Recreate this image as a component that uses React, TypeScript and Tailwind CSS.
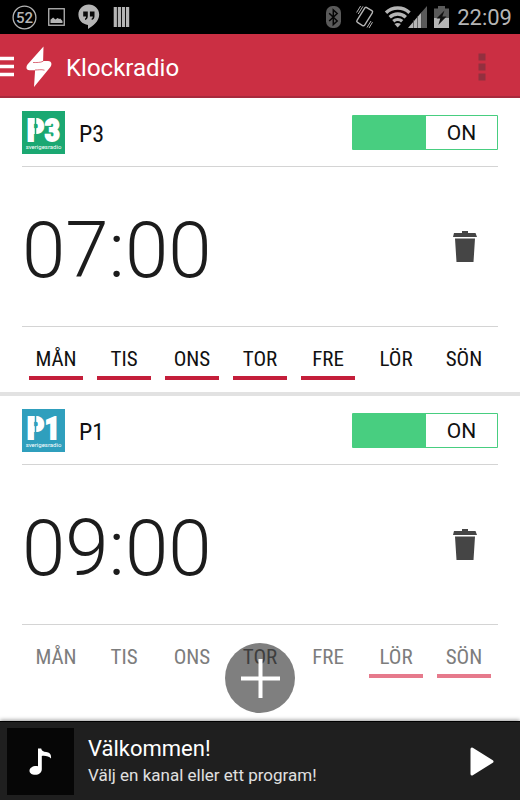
import { useState } from "react"

type Alarm = {
  channel: "P3" | "P1"
  time: string
  days: string[]
  muted?: boolean
}

const DAYS = ["MÅN", "TIS", "ONS", "TOR", "FRE", "LÖR", "SÖN"]

const ALARMS: Alarm[] = [
  {
    channel: "P3",
    time: "07:00",
    days: ["MÅN", "TIS", "ONS", "TOR", "FRE"],
  },
  {
    channel: "P1",
    time: "09:00",
    days: ["LÖR", "SÖN"],
    muted: true,
  },
]

function StatusBar() {
  return (
    <div className="flex h-[34px] items-center justify-between bg-black pr-2 pl-3 text-[#b5b5b5]">
      <div className="flex items-center gap-[11px]">
        <svg width="25" height="25" viewBox="0 0 25 25">
          <circle cx="12.5" cy="12.5" r="11.4" fill="none" stroke="currentColor" strokeWidth="1.3" />
          <text
            x="12.5"
            y="18"
            textAnchor="middle"
            fill="currentColor"
            className="text-[15px] font-medium"
          >
            52
          </text>
        </svg>
        <svg width="17" height="18" viewBox="0 0 17 18">
          <rect x=".75" y=".75" width="15.5" height="16.5" fill="none" stroke="currentColor" strokeWidth="1.3" />
          <path d="M2.5 15v-3.2l2.6-2.3 2.3 2 2.2-1.5 1.6 1.1 1-.5 2.3 2.4v2Z" fill="currentColor" />
        </svg>
        <svg width="26" height="26" viewBox="0 0 26 26">
          <path d="M12.8.6C7 .6 2.4 5 2.4 10.6s4.3 10 9.6 10.3v4c4.700-2.300 11.200-7.500 11.200-14.300C23.200 5 18.600.6 12.800.6Z" fill="currentColor" />
          <path d="M7.200 7.500h4.600v4.700c0 2-1 3.300-2.800 3.800v-1.600c.8-.4 1.100-1.100 1.100-2H7.200Zm6.700 0h4.600v4.700c0 2-1 3.300-2.800 3.800v-1.600c.8-.4 1.100-1.100 1.100-2h-2.900Z" fill="#0a0a0a" />
        </svg>
        <svg width="17" height="20" viewBox="0 0 17 20">
          <path d="M2.300 0V20M6.400 0V20M10.500 0V20M14.600 0V20" stroke="currentColor" strokeWidth="3.200" />
        </svg>
      </div>

      <div className="flex items-center">
        <svg width="15" height="23" viewBox="0 0 15 23">
          <rect width="15" height="22" rx="6.500" fill="#5a5a5a" />
          <path d="m3.200 7.200 8 7.800-3.900 3.500V4l3.900 3.500-8 7.500" fill="none" stroke="#050505" strokeWidth="1.500" />
        </svg>
        <svg width="20" height="24" viewBox="0 0 20 24" className="ml-[14px]">
          <g fill="none" stroke="currentColor">
            <rect x="5.200" y="2.800" width="9" height="17.500" rx="1.500" transform="rotate(32 9.700 11.500)" strokeWidth="1.400" />
            <path d="m1.600 7.500 4-6.500M3.200 9 8 1.300M12 22.500l4-6.500M14 23l3.500-5.800" strokeWidth="1" />
          </g>
        </svg>
        <svg width="28" height="22" viewBox="0 0 28 22" className="ml-[9px]">
          <g fill="none" stroke="currentColor" strokeWidth="3.400">
            <path d="M2 6.700C8.500.5 19 .5 25.500 6.700" />
            <path d="M5.700 11.200c4.600-4.300 11.500-4.300 16.100 0" />
            <path d="M9.300 15.300c2.600-2.300 6.300-2.300 8.900 0" />
          </g>
          <path d="M13.700 21.500 10.500 18c1.900-1.500 4.500-1.500 6.400 0Z" fill="currentColor" />
        </svg>
        <svg width="19" height="22" viewBox="0 0 19 22" className="-ml-1">
          <path d="M13.500 6.300 19 0v22h-5.500Z" fill="#5a5a5a" />
          <path d="M0 22 13.500 6.300V22Z" fill="currentColor" />
          <path d="M5.500 14v8M9.500 10v12M13.500 6v16" stroke="#444" strokeWidth=".7" />
        </svg>
        <svg width="15" height="22" viewBox="0 0 15 22" className="ml-[7px]">
          <path d="M0 2.500h4V0h7v2.500h4V22H0Z" fill="#5a5a5a" />
          <path d="M0 12h15v10H0Z" fill="currentColor" />
          <path d="m10.500 4.500-8 8h3.800l-2 6.500 8.200-8.500H8.300Z" fill="#111" />
        </svg>
        <span className="ml-2 pt-0.5 text-[22px] leading-none">22:09</span>
      </div>
    </div>
  )
}

function AppBar() {
  return (
    <header className="flex h-16 items-center border-b-2 border-[#a82a3d] bg-[#cb2f43] pt-1 text-white">
      <button aria-label="Meny" className="flex items-center">
        <svg width="14" height="22" viewBox="0 0 14 22">
          <path d="M0 2.500h14M0 10.500h14M0 18.500h14" stroke="currentColor" strokeWidth="3.400" />
        </svg>
        <svg width="26" height="42" viewBox="0 0 26 42" className="ml-3">
          <path
            d="M17.500.5 1.500 18.500C-.5 21.500.5 24.300 3.500 24.300h5.600L8 41 24.400 21c2.200-3.300.6-6-2.400-6h-4.900Z"
            fill="currentColor"
          />
          <path d="M7 16.500c4 0 7 .3 10.300-1.300M9 24c3.500 0 6-.8 9.500.2" fill="none" stroke="#cb2f43" strokeWidth=".7" />
        </svg>
      </button>
      <h1 className="ml-[14px] pt-0.5 text-2xl">Klockradio</h1>
      <button aria-label="Fler val" className="mr-[34px] ml-auto">
        <svg width="8" height="28" viewBox="0 0 8 28">
          <path d="M.5 .5h7v7h-7ZM.5 10.500h7v7h-7ZM.5 20.500h7v7h-7Z" fill="#93303f" />
        </svg>
      </button>
    </header>
  )
}

function ChannelLogo({ channel }: { channel: Alarm["channel"] }) {
  const color = channel === "P3" ? "#1ba872" : "#2f9fbd"

  return (
    <svg width="43" height="43" viewBox="0 0 43 43" aria-hidden="true">
      <rect width="43" height="43" fill={color} />
      <text
        x="21.500"
        y="30"
        textAnchor="middle"
        fill="#fff"
        stroke="#fff"
        strokeWidth="1.800"
        className="font-['Roboto_Condensed',Roboto,sans-serif] text-[31px] leading-none font-bold"
      >
        {channel}
      </text>
      <path d="M13.500 5v27" stroke={color} strokeWidth="1.500" />
      <text x="21.500" y="38" textAnchor="middle" fill="#fff" className="text-[6px] leading-none">
        sverigesradio
      </text>
    </svg>
  )
}

function AlarmCard({ alarm }: { alarm: Alarm }) {
  const [on, setOn] = useState(true)
  const [days, setDays] = useState(alarm.days)

  const toggleDay = (day: string) =>
    setDays(
      days.includes(day)
        ? days.filter((d) => d !== day)
        : [...days, day]
    )

  const activeBorder = alarm.muted ? "border-[#e67a8c]" : "border-[#c41e3a]"

  return (
    <section className="border-b-4 border-[#e2e2e2] px-[22px] last:border-b-0">
      <div className="flex h-[69px] items-center border-b border-[#d4d4d4]">
        <ChannelLogo channel={alarm.channel} />
        <h2 className="ml-[14px] pt-1 font-['Roboto_Condensed',Roboto,sans-serif] text-2xl">
          {alarm.channel}
        </h2>
        <label className="relative ml-auto flex h-[35px] w-[146px] rounded-[1px] bg-[#48ce80] p-px">
          <input
            type="checkbox"
            aria-label={`Alarm ${alarm.time}`}
            checked={on}
            onChange={() => setOn(!on)}
            className="absolute inset-0 opacity-0"
          />
          <span className="ml-auto flex w-[71px] items-center justify-center bg-white pt-1 text-[21px]">
            {on ? "ON" : "OFF"}
          </span>
        </label>
      </div>

      <div className="flex h-[160px] items-center justify-between border-b border-[#d4d4d4]">
        <button className="pt-2 text-[78px] leading-none font-light text-[#1c1c1c]">
          {alarm.time}
        </button>
        <button aria-label="Ta bort" className="mr-[21px]">
          <svg width="24" height="31" viewBox="0 0 24 31">
            <path d="M9 0h6v2h7.500L24 6H0l1-4h8ZM2 7.500h20L20.500 31h-17Z" fill="#454545" />
          </svg>
        </button>
      </div>

      <div
        className={
          alarm.muted
            ? "grid h-[65px] grid-cols-7 text-[#7d7d7d]"
            : "grid h-[65px] grid-cols-7"
        }
      >
        {DAYS.map((day) => (
          <button
            key={day}
            aria-pressed={days.includes(day)}
            onClick={() => toggleDay(day)}
            className={`mx-[7px] mb-3 border-b-4 pt-4 font-['Roboto_Condensed',Roboto,sans-serif] text-[21px] leading-none ${
              days.includes(day) ? activeBorder : "border-transparent"
            }`}
          >
            {day}
          </button>
        ))}
      </div>
    </section>
  )
}

function Player() {
  return (
    <footer className="relative flex h-[79px] items-center border-t border-black bg-[#1f1f1f] pl-[7px] text-white shadow-[0_-1px_4px_rgba(0,0,0,0.4)]">
      <div className="flex h-[67px] w-[67px] items-center justify-center bg-[#060606]">
        <svg width="23" height="27" viewBox="0 0 23 27">
          <path d="M9 .5h3.200c.3 2.500 2.300 3.300 5 3.600 3.500.4 5.300 2.300 4.800 6.400-1.800-2.200-5.500-3-9.200-2.600v13.300c0 3.200-2.900 5.600-6.600 5.600-3.300 0-5.700-1.500-5.700-4 0-3 3.700-5.300 8.500-4.600Z" fill="currentColor" />
        </svg>
      </div>
      <div className="ml-[14px]">
        <p className="text-[22px] leading-7">Välkommen!</p>
        <p className="text-[17px] leading-6 text-[#e0e0e0]">
          Välj en kanal eller ett program!
        </p>
      </div>
      <button aria-label="Spela" className="mr-[26px] ml-auto">
        <svg width="24" height="29" viewBox="0 0 24 29">
          <path d="M2 2v25L22 14.500Z" fill="currentColor" stroke="currentColor" strokeWidth="3" strokeLinejoin="round" />
        </svg>
      </button>
    </footer>
  )
}

export default function App() {
  return (
    <div className="flex min-h-screen flex-col bg-white font-[Roboto,sans-serif] text-[#111]">
      <StatusBar />
      <AppBar />
      <main className="relative flex-1">
        <div>
          {ALARMS.map((alarm) => (
            <AlarmCard key={alarm.channel} alarm={alarm} />
          ))}
        </div>
        <button
          aria-label="Lägg till alarm"
          className="absolute bottom-2 left-1/2 flex size-[70px] -translate-x-1/2 items-center justify-center rounded-full bg-black/50 text-white"
        >
          <svg width="39" height="39" viewBox="0 0 39 39">
            <path d="M19.500 0v39M0 19.500h39" stroke="currentColor" strokeWidth="4" />
          </svg>
        </button>
      </main>
      <Player />
    </div>
  )
}
